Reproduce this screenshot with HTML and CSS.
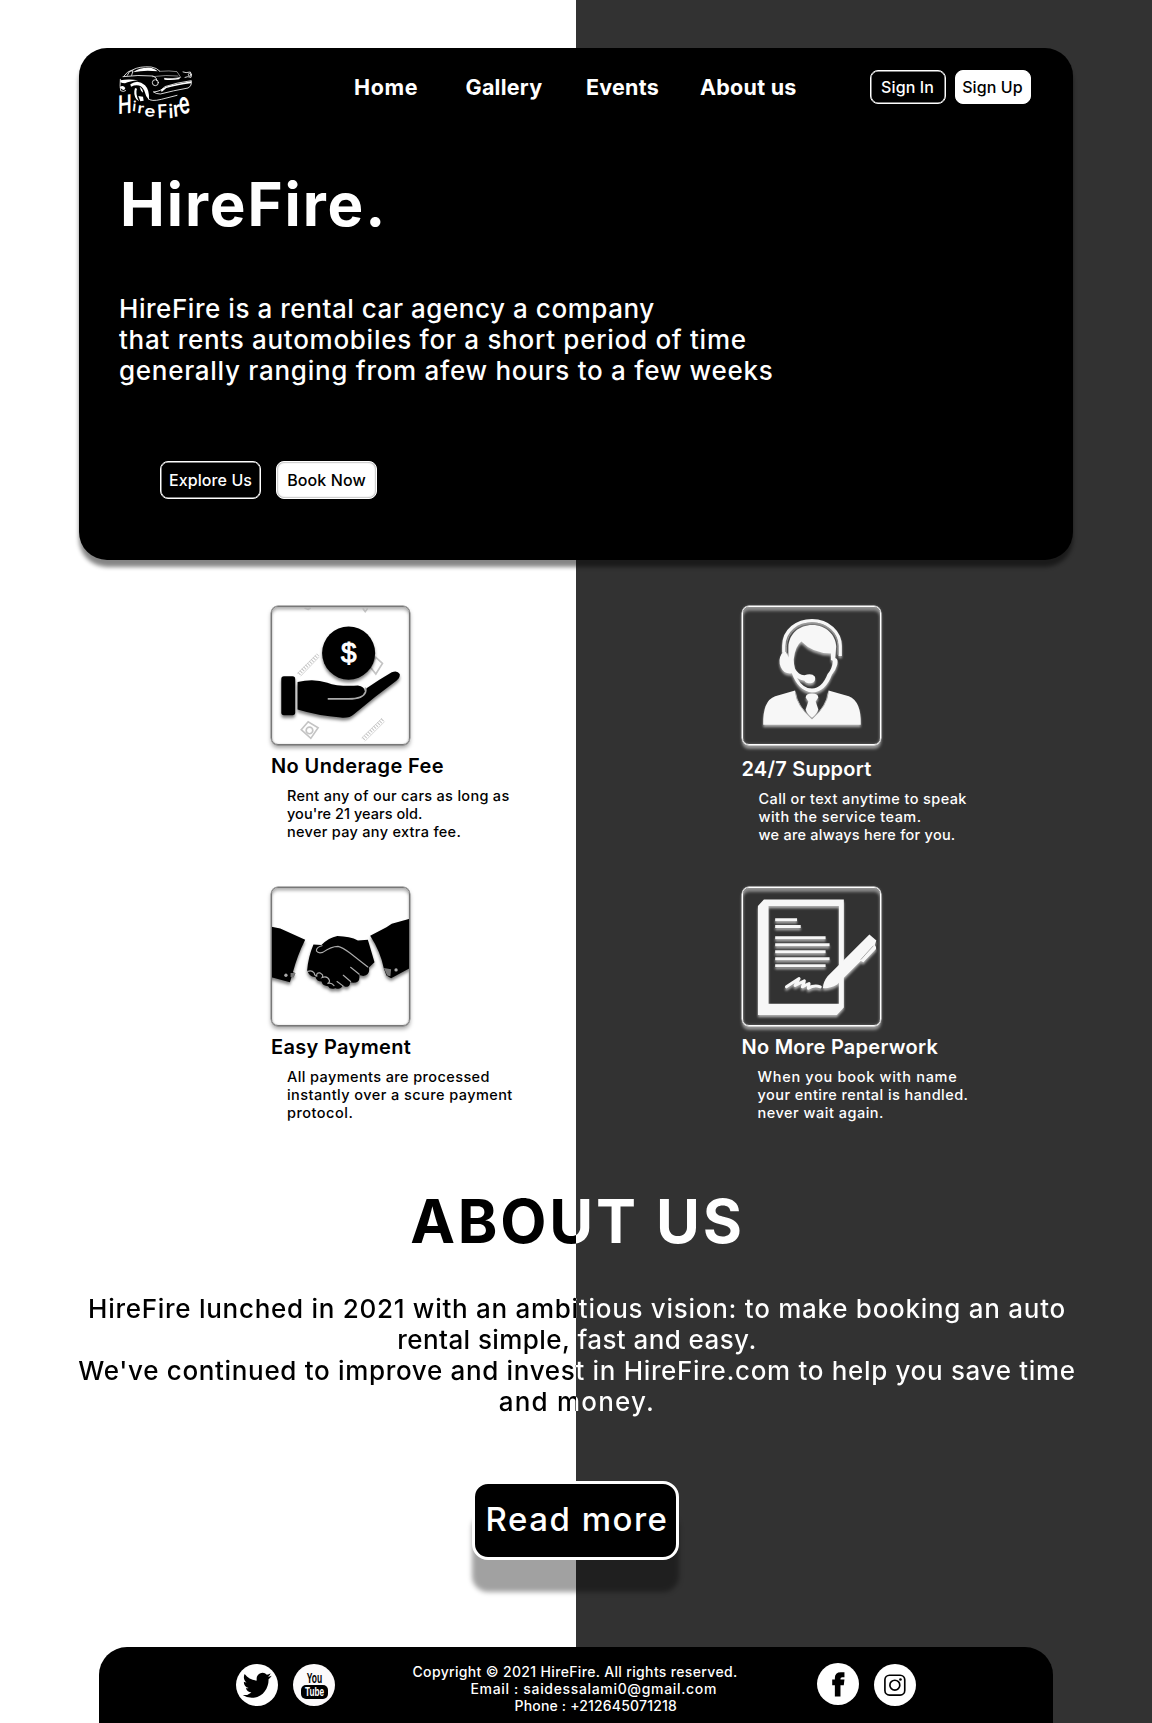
FILE: index.html
```html
<!DOCTYPE html>
<html lang="en">
<head>
<meta charset="utf-8">
<title>HireFire</title>
<link rel="stylesheet" href="styles.css">
</head>
<body>
<section class="hero">
  <header class="topbar">
    <svg class="logo" viewBox="145 75 225 165" role="img" aria-label="HireFire">
      <g fill="none" stroke="#fff" stroke-width="2.5" stroke-linecap="round" stroke-linejoin="round">
        <path d="M163 108Q172 94 188 90Q210 78 245 81Q262 84 270 93"/>
        <path d="M160 110Q205 104 250 108Q262 112 262 122"/>
        <path d="M270 94Q300 91 322 95L333 112Q310 118 284 115" stroke-width="1.5"/>
        <path d="M248 110Q290 104 325 108" stroke-width="1.5"/>
        <path d="M173 106L180 94L190 92L186 106"/>
        <path d="M152 118Q150 140 153 152Q162 157 168 152"/>
        <path d="M340 96Q348 100 362 96Q368 104 364 112Q354 108 346 112"/>
        <path d="M252 156Q275 154 285 140Q320 128 365 122Q367 138 355 144Q310 152 272 162Q258 162 252 156"/>
        <circle cx="257" cy="128" r="9"/>
        <circle cx="360" cy="104" r="4"/>
        <path d="M236 176Q244 186 275 178L322 166"/>
      </g>
      <g fill="#fff">
        <path d="M190 97Q212 81 246 84Q258 88 264 94L234 92Q212 92 190 97Z"/>
        <path d="M182 133Q205 116 226 136Q240 150 238 180Q228 170 224 152Q212 128 184 140Z"/>
        <path d="M152 121Q178 116 205 121Q180 124 166 130Q158 130 152 127Z"/>
        <path d="M150 142Q160 133 167 144Q164 153 157 148Z"/>
        <path d="M196 144Q190 162 200 178L208 184Q196 160 202 146Z"/>
        <path d="M210 140Q220 146 220 158L214 152Z"/>
        <path d="M206 168L220 170L222 182L212 184Z"/>
        <path d="M284 114Q310 118 333 112L328 118Q304 122 284 119Z"/>
        <path d="M274 150Q282 140 318 133L364 124L364 130Q318 136 290 144L276 156Z"/>
      </g>
      <g class="logo-word">
        <text transform="translate(145 223) skewY(-6) scale(1.15 1.6)" font-size="48">H</text>
        <text transform="translate(187 213) rotate(6)" font-size="42">i</text>
        <text transform="translate(202 218) rotate(8) scale(1.15 1)" font-size="42">r</text>
        <text transform="translate(223 228) rotate(5) scale(1.4 1.15)" font-size="40">e</text>
        <text transform="translate(264 235) rotate(-3) scale(.9 1)" font-size="57">F</text>
        <text transform="translate(297 235) rotate(-3)" font-size="57">i</text>
        <text transform="translate(312 231) rotate(-6) scale(1 1.15)" font-size="57">r</text>
        <text transform="translate(332 223) rotate(-9) scale(.95 1.55)" font-size="58">e</text>
      </g>
    </svg>
    <nav class="nav">
      <a class="home">Home</a><a>Gallery</a><a>Events</a><a>About us</a>
    </nav>
    <div class="auth">
      <a class="btn btn-small">Sign In</a>
      <a class="btn btn-small btn-solid">Sign Up</a>
    </div>
  </header>
  <h1>HireFire.</h1>
  <p class="lead"><span class="lead-1">HireFire is a rental car agency a company</span><span>that rents automobiles for a short period of time</span><span>generally ranging from afew hours to a few weeks</span></p>
  <div class="actions">
    <a class="btn">Explore Us</a>
    <a class="btn btn-solid btn-shaded">Book Now</a>
  </div>
</section>

<main>
  <section class="features">
    <article class="card">
      <svg class="tile" viewBox="65 49 413 411">
        <g class="mark" fill="none" stroke="#b0b0b0" stroke-width="5" stroke-linecap="round">
          <path d="M146 250L204 192" stroke-width="11" stroke-dasharray="3 5" stroke-linecap="butt"/>
          <path d="M142 248L198 192M152 256L206 200" stroke-width="2"/>
          <path d="M340 446L400 386" stroke-width="11" stroke-dasharray="3 5" stroke-linecap="butt"/>
          <path d="M336 442L396 384M346 452L404 394" stroke-width="2"/>
          <path d="M153 418L174 394L204 412L182 444Z"/><circle cx="178" cy="420" r="10"/>
          <path d="M362 230L378 200L398 218L378 250Z"/>
          <path d="M165 52L174 55L180 52M340 54L346 62L352 54"/>
        </g>
        <g class="ink">
          <circle cx="296" cy="187" r="80"/>
          <rect x="93" y="257" width="42" height="117" rx="8"/>
          <path d="M142 274Q190 262 232 276Q262 288 324 285Q344 288 345 302L350 293Q390 266 426 245Q443 238 450 250Q452 262 440 270Q372 320 312 371Q298 384 272 381Q204 376 142 357Z"/>
        </g>
        <path d="M233 325H296Q340 325 347 304Q349 298 346 291" fill="none" stroke="#aaa" stroke-width="5"/>
        <text x="296" y="215" class="dollar">$</text>
      </svg>
      <h3 class="s44">No Underage Fee</h3>
      <p><span class="s37">Rent any of our cars as long as</span><span class="s08">you're 21 years old.</span><span class="s37">never pay any extra fee.</span></p>
    </article>

    <article class="card light support">
      <svg class="tile" viewBox="65 49 413 411">
        <g class="ink">
          <path d="M188 186V165C188 118 228 89 273 89C322 89 358 124 358 165V196" fill="none" stroke="#f7f7f7" stroke-width="10"/>
          <path d="M202 200V168C204 128 234 102 274 102C316 102 344 132 346 166L343 202C350 204 352 210 349 222Q344 240 333 252Q314 304 273 306Q232 302 212 248Q190 252 179 230Q170 208 181 190Q190 178 198 186ZM218 206Q218 222 222 234Q232 252 250 254Q272 246 282 258Q286 274 270 278Q254 278 250 270Q238 268 228 262Q246 294 273 294Q304 292 320 250Q334 236 336 210L330 208V188Q276 188 241 152Q222 166 218 206Z" fill-rule="evenodd"/>
          <path d="M222 300Q226 344 273 386Q320 344 323 300L384 317Q422 332 420 403H126Q124 330 162 317Z"/>
          <path d="M273 309Q292 309 292 321L284 333L292 357Q288 370 273 382Q258 370 254 357L262 333L254 321Q254 309 273 309Z"/>
        </g>
        <path d="M223 306Q228 346 273 386Q318 346 322 306" fill="none" stroke="#aaa" stroke-width="3"/>
        <path d="M196 188V166C198 124 232 96 274 96C320 96 350 130 351 166V192" fill="none" stroke="#999" stroke-width="3"/>
      </svg>
      <h3 class="s22">24/7 Support</h3>
      <p><span class="s44">Call or text anytime to speak</span><span class="s52">with the service team.</span><span class="s30">we are always here for you.</span></p>
    </article>

    <article class="card">
      <svg class="tile" viewBox="65 53 413 411">
        <g class="ink">
          <path d="M60 168L90 174L165 208Q142 254 128 306L135 308L130 320H124L119 336L60 320Z"/>
          <path d="M480 145L426 160L410 170L361 196Q392 244 402 294L410 316L424 324L480 294Z"/>
          <path d="M190 222L214 224Q236 202 262 197Q300 198 324 210L354 208Q364 242 374 276L357 292Q362 314 340 317L328 314Q332 338 310 338L300 336Q302 350 286 350L278 346Q272 360 256 354Q240 360 234 348Q218 348 214 334Q200 334 196 320Q178 322 171 300Q174 260 190 222Z"/>
        </g>
        <g fill="none" stroke="#aaa" stroke-width="3.5" stroke-linecap="round">
          <path d="M216 226Q198 230 199 242Q204 250 218 246Q244 228 264 228Q276 230 300 248L354 290"/>
          <path d="M172 304Q184 298 192 308Q194 318 200 318Q198 306 210 308Q222 314 216 322Q232 316 238 330Q240 338 232 340Q244 336 252 346"/>
          <path d="M302 291L328 312M280 315L302 334M261 334L279 347"/>
        </g>
        <path d="M121 308L136 308L130 322L121 320ZM402 293L424 297L422 318L412 316Z" fill="#777"/>
        <circle cx="107" cy="315" r="5" fill="#aaa"/><circle cx="439" cy="299" r="5" fill="#aaa"/>
      </svg>
      <h3 class="s33">Easy Payment</h3>
      <p><span class="s44">All payments are processed</span><span class="s48">instantly over a scure payment</span><span class="s60">protocol.</span></p>
    </article>

    <article class="card light">
      <svg class="tile" viewBox="65 53 413 411">
        <g class="ink">
          <path d="M128 87H369V412L348 435H110V106ZM142 106V401H354V106Z" fill-rule="evenodd"/>
          <path d="M162 148H228M162 168H239M162 202H314M162 223H326M162 244H314M162 265H326M162 286H314" stroke="#f7f7f7" stroke-width="9"/>
          <path d="M196 350L234 325L222 346L250 332L244 350L264 340L262 354Q280 344 298 350" fill="none" stroke="#f7f7f7" stroke-width="9" stroke-linecap="round" stroke-linejoin="round"/>
          <path d="M446 192L467 210L462 224Q468 230 466 236L428 276L420 272L349 343Q326 356 306 354Q306 336 320 318Z"/>
        </g>
        <path d="M458 226L420 268" stroke="#aaa" stroke-width="3"/>
      </svg>
      <h3 class="s30">No More Paperwork</h3>
      <p><span class="s77">When you book with name</span><span class="s52">your entire rental is handled.</span><span class="s60">never wait again.</span></p>
    </article>
  </section>

  <section class="about">
    <h2>ABOUT US</h2>
    <p><span>HireFire lunched in 2021 with an ambitious vision: to make booking an auto</span><span class="about-2">rental simple, fast and easy.</span><span class="about-3">We've continued to improve and invest in HireFire.com to help you save time</span><span class="about-4">and money.</span></p>
    <a class="more">Read more</a>
  </section>
</main>

<footer class="footer">
  <div class="social">
    <svg viewBox="0 0 42 42" role="img" aria-label="Twitter"><circle cx="21" cy="21" r="21" fill="#fff"/><path transform="translate(6.7 6) scale(1.2 1.28)" d="M23.953 4.57a10 10 0 01-2.825.775 4.958 4.958 0 002.163-2.723c-.951.555-2.005.959-3.127 1.184a4.92 4.92 0 00-8.384 4.482C7.69 8.095 4.067 6.13 1.64 3.162a4.822 4.822 0 00-.666 2.475c0 1.71.87 3.213 2.188 4.096a4.904 4.904 0 01-2.228-.616v.06a4.923 4.923 0 003.946 4.827 4.996 4.996 0 01-2.212.085 4.936 4.936 0 004.604 3.417 9.867 9.867 0 01-6.102 2.105c-.39 0-.779-.023-1.17-.067a13.995 13.995 0 007.557 2.209c9.053 0 13.998-7.496 13.998-13.985 0-.21 0-.42-.015-.63A9.935 9.935 0 0024 4.59z"/></svg>
    <svg viewBox="0 0 42 42"><circle cx="21" cy="21" r="21" fill="#fcfafb"/><rect x="8" y="21" width="27" height="14" rx="5"/><text class="yt" x="13.7" y="18.8" font-size="14" textLength="15.4" lengthAdjust="spacingAndGlyphs">You</text><text class="yt" x="12" y="32.4" font-size="13" fill="#fff" textLength="19" lengthAdjust="spacingAndGlyphs">Tube</text></svg>
  </div>
  <p class="legal"><span class="copy">Copyright © 2021 HireFire. All rights reserved.</span><span class="mail">Email : saidessalami0@gmail.com</span><span class="phone">Phone : +212645071218</span></p>
  <div class="social social-right">
    <svg class="fb" viewBox="741 99 127 127" role="img" aria-label="Facebook"><circle cx="804.500" cy="162.500" r="63.500" fill="#fff"/><path d="M795 200V166H787V149H795V144Q795 127 813 127H824V142H817Q812 142 812 147V149H824L822 166H812V200Z"/></svg>
    <svg viewBox="914 102 127 127" role="img" aria-label="Instagram"><circle cx="977.500" cy="165.500" r="63.500" fill="#fff"/><g fill="none" stroke="#000" stroke-width="5"><rect x="947" y="136" width="60" height="60" rx="14"/><circle cx="977" cy="166" r="15"/></g><circle cx="994" cy="149" r="4"/></svg>
  </div>
</footer>
</body>
</html>
```
FILE: styles.css
```css
* { box-sizing: border-box; }

body {
  margin: 0;
  width: 1152px;
  height: 1723px;
  overflow: hidden;
  font-family: Inter, "Open Sans", sans-serif;
  color: #000;
  background: linear-gradient(90deg, #fff 576px, #323232 576px);
}
body::before { content: ""; display: table; }

h1, h2, h3, p { margin: 0; }
p span { display: block; white-space: nowrap; }
svg { display: block; }

/* Hero */
.hero {
  width: 993.5px;
  height: 512px;
  margin: 48px 0 0 79px;
  padding: 18px 0 0 39px;
  border-radius: 28px;
  background: #000;
  color: #fff;
  box-shadow: 0 7px 4px rgba(0, 0, 0, .48);
}

.topbar { display: flex; height: 108px; }
.logo { width: 75px; height: 55px; margin-top: -1px; overflow: visible; }
.logo-word { font-weight: 600; fill: #fff; }

.nav {
  display: grid;
  grid-template-columns: 111.5px 120.5px 114px 169.5px;
  margin: 8.6px 0 0 161px;
  font-weight: 700;
  font-size: 21.5px;
  line-height: 24px;
  letter-spacing: .25px;
}
.nav .home { letter-spacing: .6px; }

.auth { display: flex; gap: 9px; margin-top: 3.5px; }

.btn {
  display: flex;
  align-items: center;
  justify-content: center;
  width: 101px;
  height: 38px;
  border: 1px solid #fff;
  border-radius: 8px;
  box-shadow: inset 0 0 0 .5px #fff;
  font-size: 16px;
  font-weight: 450;
  letter-spacing: .1px;
  white-space: nowrap;
}
.btn-small { width: 76px; height: 34px; }
.btn-solid { background: #fff; color: #000; }
.btn-shaded { box-shadow: inset 0 0 2px rgba(0, 0, 0, .7); }

h1 {
  margin-left: 2px;
  font-size: 60px;
  line-height: 60px;
  font-weight: 700;
  letter-spacing: 1.9px;
}

.lead {
  margin: 59px 0 0 1px;
  font-size: 26px;
  line-height: 31px;
  font-weight: 450;
  letter-spacing: .72px;
}
.lead-1 { letter-spacing: .55px; }

.actions { display: flex; gap: 15px; margin: 75px 0 0 42px; }

/* Features */
.features {
  display: grid;
  grid-template-columns: 470.5px 240px;
  grid-auto-rows: 281.5px;
  margin: 45.5px 0 0 271px;
}
.tile {
  width: 139px;
  height: 139px;
  border: 1px solid #777;
  border-radius: 7px;
  box-shadow: 0 0 0 .4px #777, 0 3px 4px rgba(0, 0, 0, .35), inset 0 3px 3px rgba(0, 0, 0, .25), inset 0 0 2px rgba(0, 0, 0, .2);
}
.tile .ink { fill: #000; filter: drop-shadow(0 8px 5px rgba(0, 0, 0, .5)); }
.mark { filter: blur(2px); opacity: .75; }
.dollar { fill: #fff; stroke: #fff; stroke-width: 3px; font: 500 84px "Liberation Sans", sans-serif; text-anchor: middle; }

.light { color: #fff; }
.light .tile {
  border-color: #fff;
  box-shadow: 0 0 0 .4px #fff, 0 4px 3px rgba(255, 255, 255, .45), 0 0 3px rgba(255, 255, 255, .3), inset 0 4px 3px rgba(255, 255, 255, .4), inset 0 0 3px rgba(255, 255, 255, .3);
}
.light .tile .ink { fill: #f7f7f7; filter: drop-shadow(0 7px 4px rgba(255, 255, 255, .6)); }

.card h3 { margin-top: 9px; font-size: 20px; line-height: 24px; font-weight: 600; }
.card p { margin: 9px 0 0 16px; font-size: 14.5px; line-height: 18px; font-weight: 450; }
.card.support h3 { margin-top: 12px; }
.card.support p { margin-left: 17px; }

.s08 { letter-spacing: .04px; }
.s22 { letter-spacing: .22px; }
.s30 { letter-spacing: .25px; }
.s33 { letter-spacing: .33px; }
.s37 { letter-spacing: .3px; }
.s44 { letter-spacing: .4px; }
.s48 { letter-spacing: .43px; }
.s52 { letter-spacing: .45px; }
.s60 { letter-spacing: .5px; }
.s77 { letter-spacing: .7px; }

/* About */
.about { margin-top: 22.5px; text-align: center; }
.about h2, .about p {
  background: linear-gradient(90deg, #000 576px, #fff 576px);
  -webkit-background-clip: text;
  background-clip: text;
  color: transparent;
}
.about h2 {
  padding-left: 3px;
  font-size: 60px;
  line-height: 60px;
  font-weight: 700;
  letter-spacing: 2.8px;
}
.about p {
  margin-top: 42px;
  padding-left: 2px;
  font-size: 26px;
  line-height: 31px;
  font-weight: 450;
  letter-spacing: .72px;
}
.about-2 { letter-spacing: .42px; }
.about-3 { letter-spacing: .67px; }
.about-4 { letter-spacing: 1.2px; }

.more {
  display: block;
  width: 207px;
  height: 79px;
  margin: 64px 0 0 472px;
  padding-left: 3px;
  border: 3px solid #fff;
  border-radius: 16px;
  background: #000;
  color: #fff;
  font-size: 33px;
  line-height: 70px;
  font-weight: 500;
  letter-spacing: 1.5px;
  white-space: nowrap;
  box-shadow: 0 32px 5px rgba(0, 0, 0, .37);
}

/* Footer */
.footer {
  display: flex;
  width: 954px;
  height: 76px;
  margin: 87px 0 0 99px;
  padding: 15.5px 0 0 136.5px;
  border-radius: 28px 28px 0 0;
  background: #000;
  color: #fff;
}
.social { display: flex; gap: 15px; padding-top: 1px; }
.social svg { width: 42px; height: 42px; }
.social .fb { margin-top: -1px; }
.yt { font-family: "Liberation Sans", sans-serif; font-weight: 700; }
.legal { width: 404px; padding-left: 78px; font-size: 14px; line-height: 17px; font-weight: 450; }
.copy { letter-spacing: .34px; }
.mail { padding-left: 58px; letter-spacing: .66px; }
.phone { padding-left: 102px; letter-spacing: .18px; }
.social-right { margin-left: 78.5px; }
```
